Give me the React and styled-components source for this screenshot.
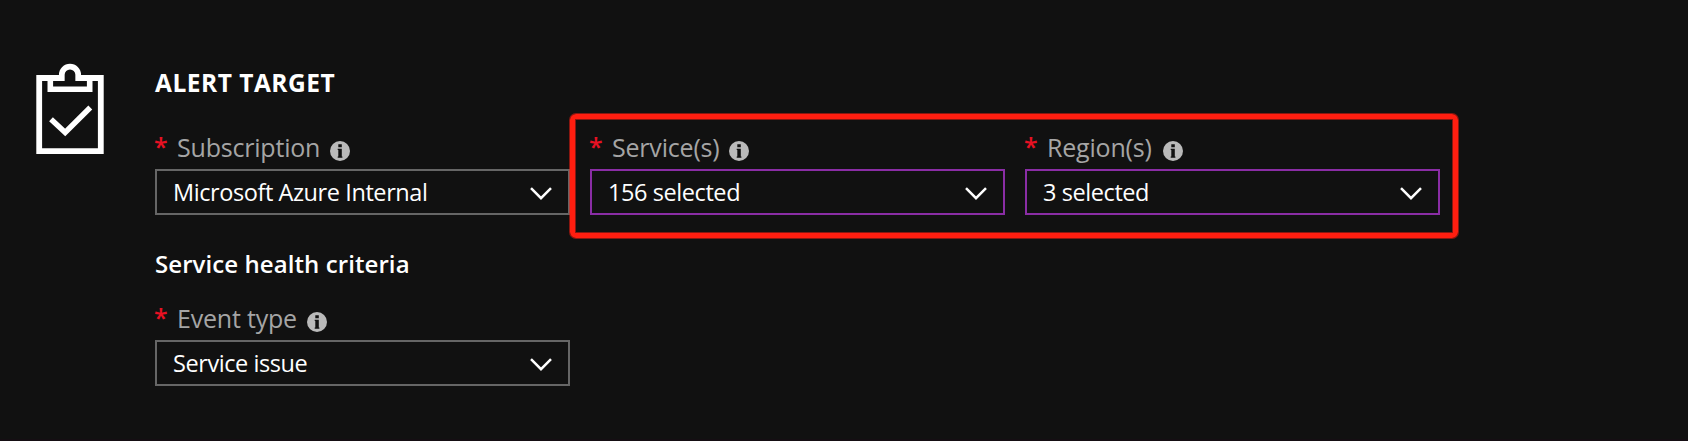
import React from "react";
import styled, { createGlobalStyle } from "styled-components";

const GlobalStyle = createGlobalStyle`
  * { box-sizing: border-box; }
  body { margin: 0; background: #111111; }
`;

const Page = styled.main`
  position: relative;
  display: flex;
  gap: 50px;
  width: 1688px;
  height: 441px;
  padding: 63px 0 0 36px;
  overflow: hidden;
  background: #111111;
  border-bottom: 2px solid #150e13;
  font-family: "Open Sans", "Noto Sans", sans-serif;
  color: #ffffff;
`;

const ClipboardIcon = styled.svg`
  flex: none;
  width: 69px;
  height: 92px;
`;

const Content = styled.div`
  display: flex;
  flex-direction: column;
`;

const Heading = styled.h2`
  height: 40px;
  margin: 0;
  font-size: ${(p) => p.$size || 24}px;
  font-weight: ${(p) => p.$weight};
  line-height: 40px;
  letter-spacing: ${(p) => p.$spacing || 0}px;
  white-space: nowrap;
`;

const Row = styled.div`
  display: flex;
  gap: 20px;
  margin: ${(p) => p.$margin || "0"};
`;

const Field = styled.div`
  width: 415px;
`;

const Label = styled.label`
  display: flex;
  height: 42px;
  color: #a5a5a5;
  font-size: 25px;
  line-height: 40px;
  letter-spacing: -0.2px;
  white-space: nowrap;
`;

const Required = styled.span`
  width: 22px;
  color: #e81123;
  font-size: 25px;
  font-weight: 600;
  line-height: 39px;
  text-indent: -1px;
`;

const LabelText = styled.span`
  width: ${(p) => p.$width}px;
`;

const InfoIcon = styled.svg`
  width: 20px;
  height: 20px;
  margin-top: 14px;
`;

const SelectBox = styled.div`
  display: flex;
  align-items: center;
  justify-content: space-between;
  height: 46px;
  padding: 0 16px 0 16px;
  border: 2px solid ${(p) => (p.$edited ? "#8a2da5" : "#666666")};
  font-size: 23.5px;
  line-height: 40px;
  letter-spacing: -0.42px;
  white-space: nowrap;
`;

const Chevron = styled.svg`
  width: 22px;
  height: 13px;
  margin-top: 2px;
`;

const Highlight = styled.div`
  position: absolute;
  left: 570px;
  top: 114px;
  width: 888px;
  height: 124px;
  border: 5px solid #ff1e10;
  border-radius: 6px;
  box-shadow: 0 0 0 1px rgba(255, 30, 16, 0.5), inset 0 0 0 1px rgba(255, 30, 16, 0.5);
  pointer-events: none;
`;

function SelectField({ label, labelWidth, value, edited }) {
  return (
    <Field>
      <Label>
        <Required>*</Required>
        <LabelText $width={labelWidth}>{label}</LabelText>
        <InfoIcon viewBox="0 0 20 20">
          <circle cx="10" cy="10" r="10" fill="#bababa" />
          <path d="M8.300 3.200h3.500v3H8.300zM8.300 7.700h3.500v9.100H8.300zM7.700 7.700h1v1.200h-1zM7.700 15.600h4.700v1.200H7.700z" fill="#111111" />
        </InfoIcon>
      </Label>
      <SelectBox $edited={edited}>
        <span>{value}</span>
        <Chevron viewBox="0 0 22 13">
          <path d="M1 1.200 11 11.200 21 1.200" fill="none" stroke="#ffffff" strokeWidth="2.5" />
        </Chevron>
      </SelectBox>
    </Field>
  );
}

export default function App() {
  return (
    <>
      <GlobalStyle />
      <Page>
        <ClipboardIcon viewBox="0 -1 69 92" fill="none" stroke="#ffffff">
          <path d="M28 14H3.200v73.200H64.800V14H40" strokeWidth="5.800" />
          <path d="M14.300 14v11.200h39.400V14" strokeWidth="5.600" />
          <path d="M25.800 17V10.800a8.200 8.200 0 0 1 16.400 0V17" strokeWidth="5.700" />
          <path d="M15 55.300l14.200 13.200L54.300 43.500" strokeWidth="5.500" />
        </ClipboardIcon>
        <Content>
          <Heading $weight={700} $size={24.5} $spacing={0.5}>ALERT TARGET</Heading>
          <Row $margin="24px 0 0">
            <SelectField label="Subscription" labelWidth={153} value="Microsoft Azure Internal" />
            <SelectField label="Service(s)" labelWidth={117} value="156 selected" edited />
            <SelectField label="Region(s)" labelWidth={116} value="3 selected" edited />
          </Row>
          <Row $margin="29px 0 0">
            <Heading $weight={600} $spacing={0.08}>Service health criteria</Heading>
          </Row>
          <Row $margin="14px 0 0">
            <SelectField label="Event type" labelWidth={130} value="Service issue" />
          </Row>
        </Content>
        <Highlight />
      </Page>
    </>
  );
}
